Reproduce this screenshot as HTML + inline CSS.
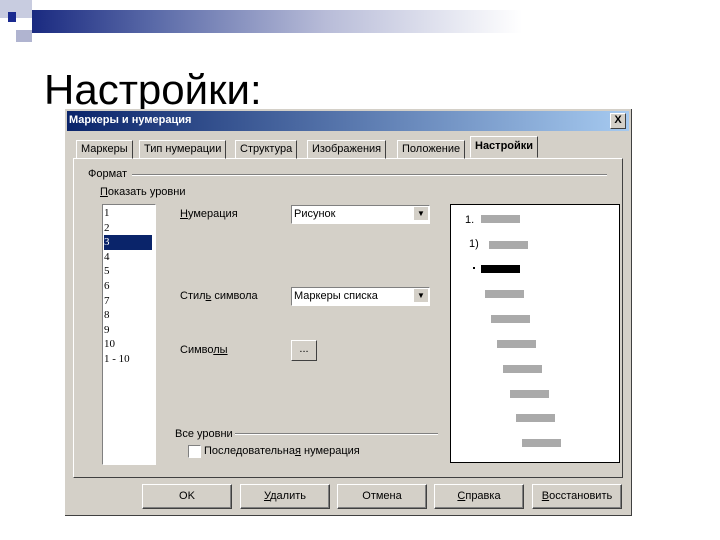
<!DOCTYPE html><html><head><meta charset="utf-8"><style>
body{margin:0;width:720px;height:540px;background:#fff;position:relative;overflow:hidden;font-family:"Liberation Sans",sans-serif}
.a{position:absolute}
.t{font-size:11px;color:#000;white-space:nowrap}
.btn{position:absolute;top:484px;height:23px;background:#d4d0c8;border:1px solid;border-color:#fff #404040 #404040 #fff;box-shadow:inset -1px -1px #808080;font-size:11px;text-align:center;line-height:22px}
.bar{position:absolute;height:8px;background:#aaa}
</style></head><body>
<div class="a" style="left:32px;top:10px;width:490px;height:23px;background:linear-gradient(90deg,#1a2a80,#5a6aa8 25%,#b8bcd8 60%,#fff)"></div>
<div class="a" style="left:0;top:0;width:32px;height:18px;background:#c8cce0"></div>
<div class="a" style="left:8px;top:12px;width:8px;height:10px;background:#1a2a90"></div>
<div class="a" style="left:16px;top:30px;width:16px;height:12px;background:#b0b4d0"></div>
<div class="a" style="left:44px;top:66px;font-size:42px;line-height:48px;color:#000">Настройки:</div>
<div class="a" style="left:65px;top:109px;width:566px;height:406px;background:#d4d0c8;border-right:1px solid #404040;border-bottom:1px solid #404040"></div>
<div class="a" style="left:67px;top:111px;width:562px;height:20px;background:linear-gradient(90deg,#0a246a,#a6caf0)"></div>
<div class="a t" style="left:69px;top:114px;color:#fff;font-weight:bold">Маркеры и нумерация</div>
<div class="a" style="left:610px;top:113px;width:14px;height:14px;background:#d4d0c8;border:1px solid;border-color:#fff #404040 #404040 #fff;font-size:11px;text-align:center;line-height:13px;font-weight:bold">X</div>
<div class="a" style="left:73px;top:158px;width:548px;height:318px;border:1px solid;border-color:#fff #404040 #404040 #fff"></div>
<div class="a t" style="left:76px;top:140px;border:1px solid;border-color:#fff #404040 transparent #fff;padding:2px 4px 3px">Маркеры</div>
<div class="a t" style="left:139px;top:140px;border:1px solid;border-color:#fff #404040 transparent #fff;padding:2px 4px 3px">Тип нумерации</div>
<div class="a t" style="left:235px;top:140px;border:1px solid;border-color:#fff #404040 transparent #fff;padding:2px 4px 3px">Структура</div>
<div class="a t" style="left:307px;top:140px;border:1px solid;border-color:#fff #404040 transparent #fff;padding:2px 4px 3px">Изображения</div>
<div class="a t" style="left:397px;top:140px;border:1px solid;border-color:#fff #404040 transparent #fff;padding:2px 4px 3px">Положение</div>
<div class="a t" style="left:470px;top:136px;border:1px solid;border-color:#fff #404040 transparent #fff;padding:3px 4px 5px;font-weight:bold;background:#d4d0c8">Настройки</div>
<div class="a t" style="left:88px;top:168px">Формат</div>
<div class="a" style="left:132px;top:174px;width:475px;border-top:1px solid #808080;border-bottom:1px solid #fff"></div>
<div class="a t" style="left:100px;top:186px"><u>П</u>оказать уровни</div>
<div class="a" style="left:102px;top:204px;width:52px;height:259px;background:#fff;border:1px solid;border-color:#808080 #fff #fff #808080"></div>
<div class="a" style="left:104px;top:206px;font-family:'Liberation Serif',serif;font-size:11px;line-height:14.6px">1<br>2<br><span style="display:block;width:48px;background:#0a246a;color:#fff">3</span>4<br>5<br>6<br>7<br>8<br>9<br>10<br>1 - 10</div>
<div class="a t" style="left:180px;top:208px"><u>Н</u>умерация</div>
<div class="a t" style="left:180px;top:290px">Стил<u>ь</u> символа</div>
<div class="a t" style="left:180px;top:344px">Симво<u>лы</u></div>
<div class="a" style="left:291px;top:205px;width:137px;height:17px;background:#fff;border:1px solid;border-color:#808080 #fff #fff #808080"><span class="t" style="position:absolute;left:2px;top:2px">Рисунок</span><div style="position:absolute;right:1px;top:1px;width:14px;height:13px;background:#d4d0c8;font-size:8px;text-align:center;line-height:13px">▼</div></div>
<div class="a" style="left:291px;top:287px;width:137px;height:17px;background:#fff;border:1px solid;border-color:#808080 #fff #fff #808080"><span class="t" style="position:absolute;left:2px;top:2px">Маркеры списка</span><div style="position:absolute;right:1px;top:1px;width:14px;height:13px;background:#d4d0c8;font-size:8px;text-align:center;line-height:13px">▼</div></div>
<div class="a" style="left:291px;top:340px;width:24px;height:19px;background:#d4d0c8;border:1px solid;border-color:#fff #404040 #404040 #fff;font-size:11px;text-align:center;line-height:16px">...</div>
<div class="a t" style="left:175px;top:428px">Все уровни</div>
<div class="a" style="left:235px;top:433px;width:203px;border-top:1px solid #808080;border-bottom:1px solid #fff"></div>
<div class="a" style="left:188px;top:445px;width:11px;height:11px;background:#fff;border:1px solid;border-color:#808080 #fff #fff #808080"></div>
<div class="a t" style="left:204px;top:445px">Последовательна<u>я</u> нумерация</div>
<div class="a" style="left:450px;top:204px;width:168px;height:257px;background:#fff;border:1px solid #000"></div>
<div class="a t" style="left:465px;top:214px">1.</div><div class="bar" style="left:481px;top:215px;width:39px"></div>
<div class="a t" style="left:469px;top:238px">1)</div><div class="bar" style="left:489px;top:241px;width:39px"></div>
<div class="a" style="left:473px;top:267px;width:2px;height:2px;background:#000"></div><div class="bar" style="left:481px;top:265px;width:39px;background:#000"></div>
<div class="bar" style="left:485px;top:290px;width:39px"></div>
<div class="bar" style="left:491px;top:315px;width:39px"></div>
<div class="bar" style="left:497px;top:340px;width:39px"></div>
<div class="bar" style="left:503px;top:365px;width:39px"></div>
<div class="bar" style="left:510px;top:390px;width:39px"></div>
<div class="bar" style="left:516px;top:414px;width:39px"></div>
<div class="bar" style="left:522px;top:439px;width:39px"></div>
<div class="btn" style="left:142px;width:88px">OK</div>
<div class="btn" style="left:240px;width:88px"><u>У</u>далить</div>
<div class="btn" style="left:337px;width:88px">Отмена</div>
<div class="btn" style="left:434px;width:88px"><u>С</u>правка</div>
<div class="btn" style="left:532px;width:88px"><u>В</u>осстановить</div>
</body></html>
